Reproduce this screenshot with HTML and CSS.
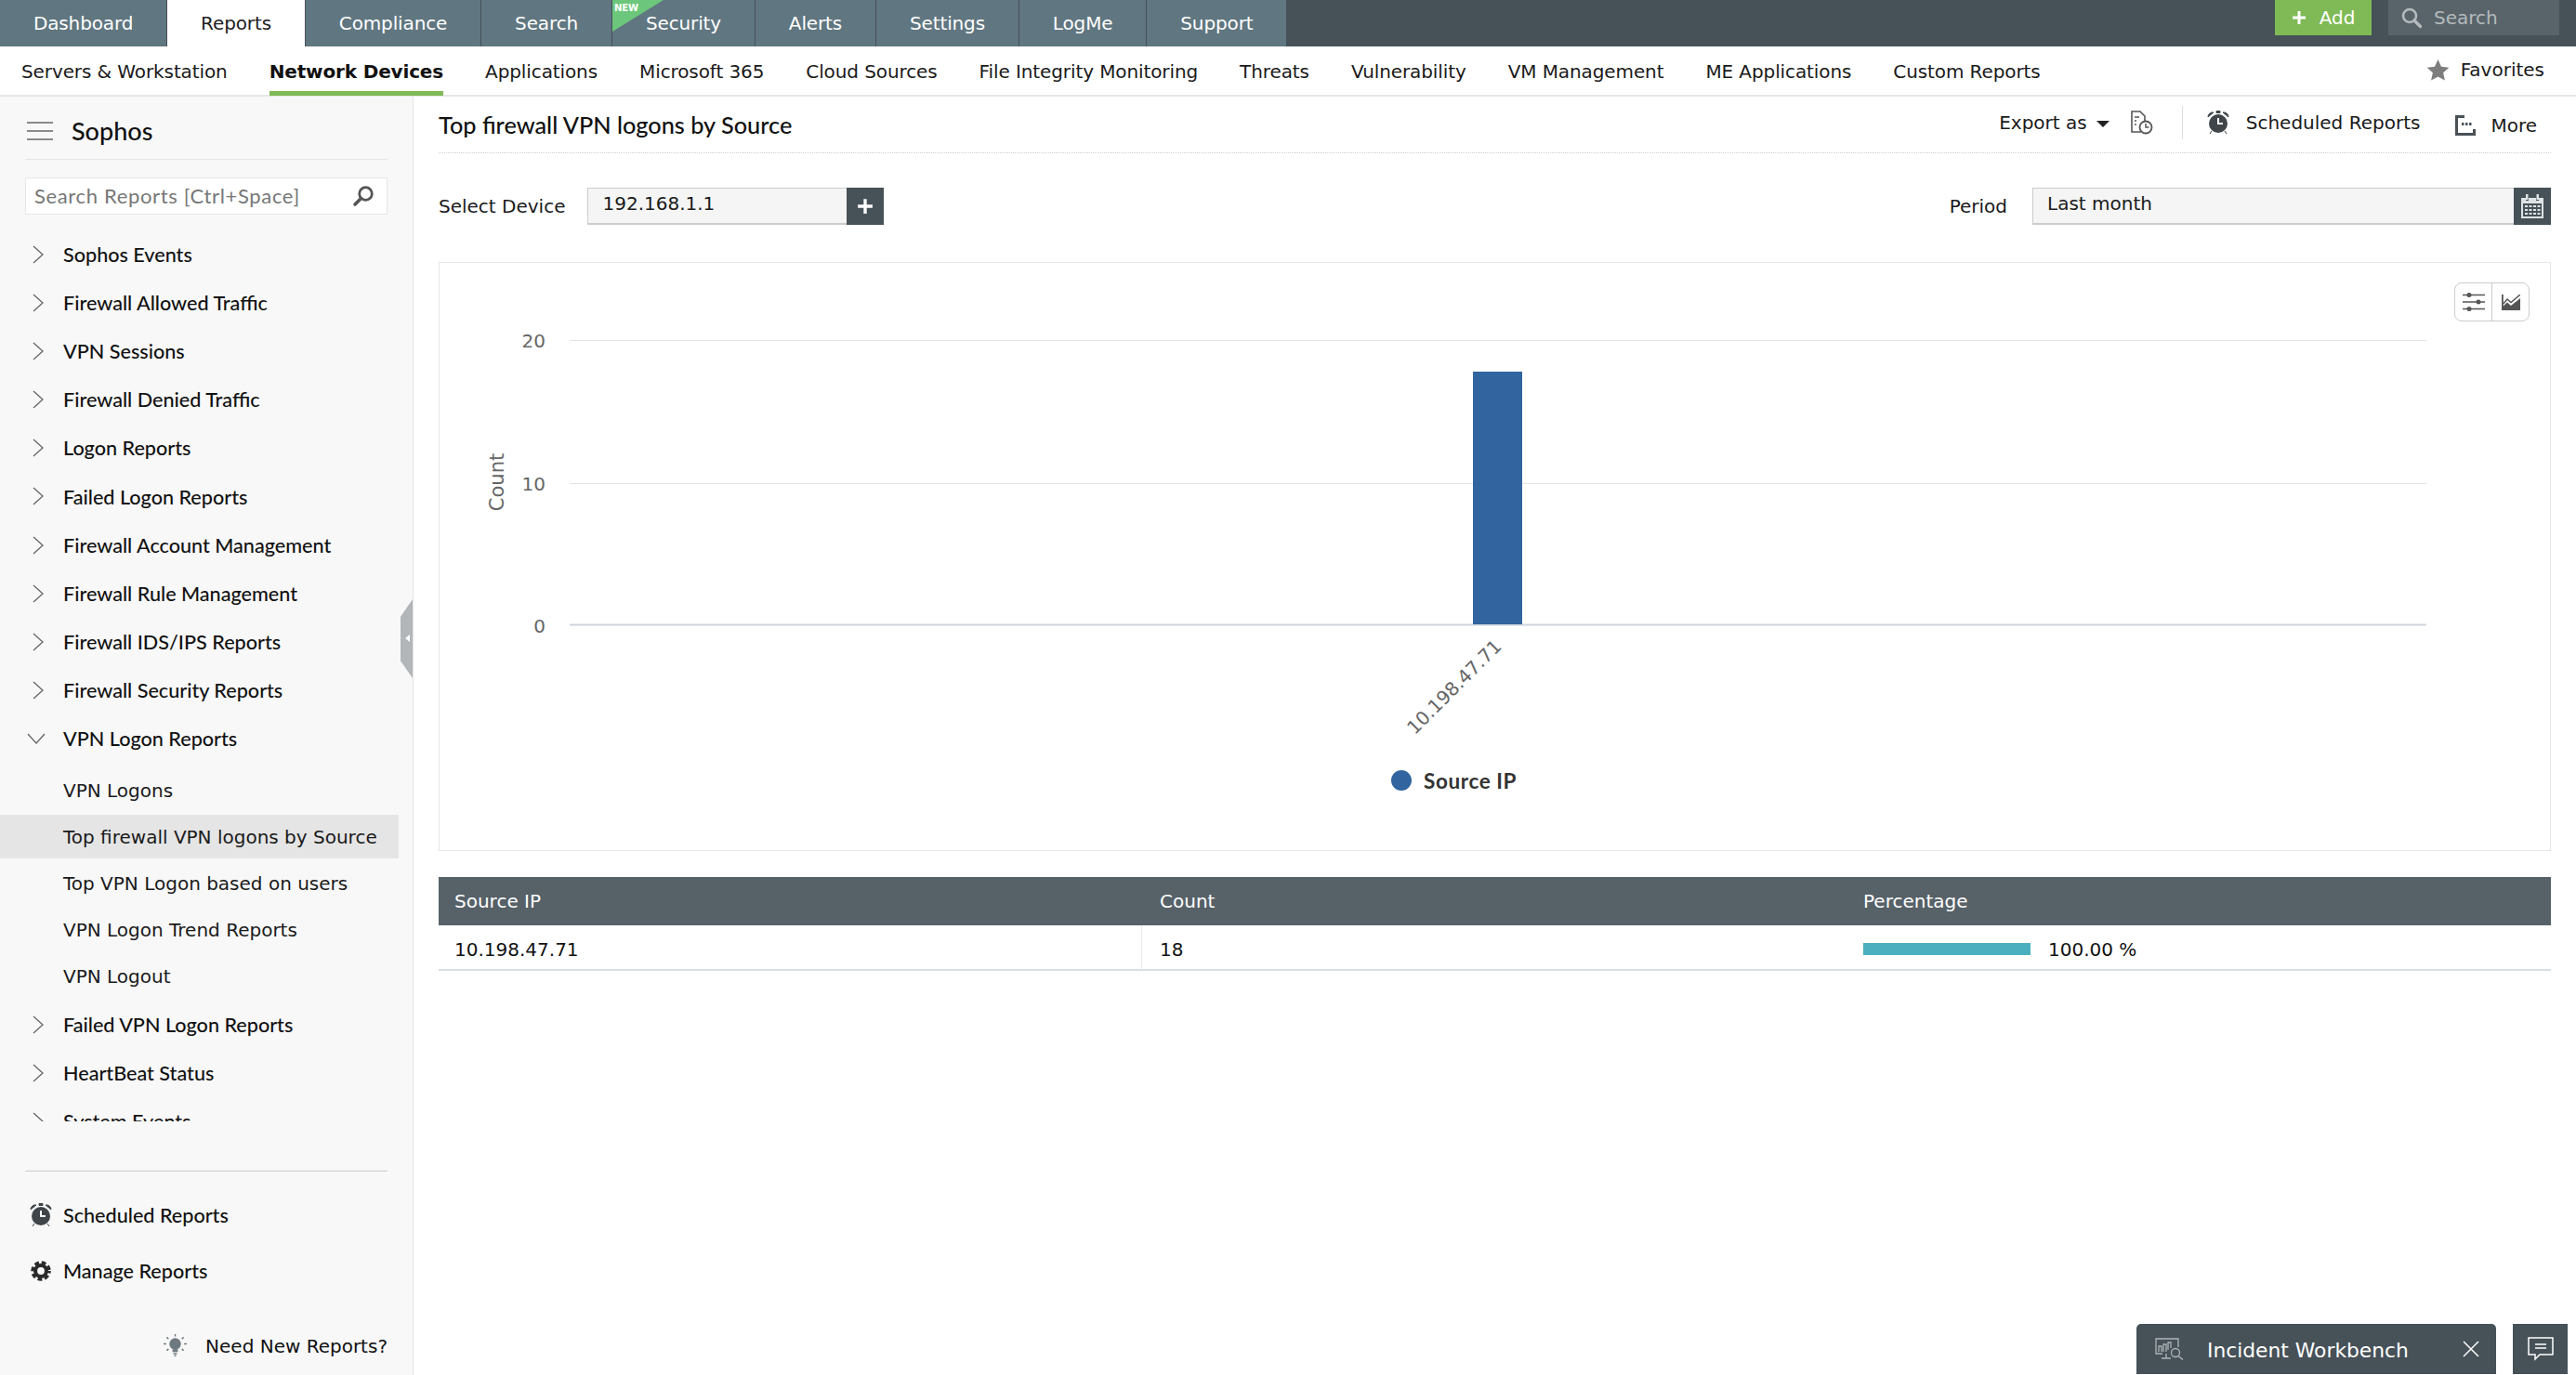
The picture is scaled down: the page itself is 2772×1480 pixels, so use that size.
FILE: index.html
```html
<!DOCTYPE html>
<html lang="en">
<head>
<meta charset="utf-8">
<title>Top firewall VPN logons by Source</title>
<link rel="stylesheet" href="styles.css">
</head>
<body>
<div class="app">
  <header class="topbar">
    <nav class="tabs">
      <a class="tab">Dashboard</a>
      <a class="tab tab-active">Reports</a>
      <a class="tab">Compliance</a>
      <a class="tab">Search</a>
      <a class="tab tab-new"><span class="ribbon"></span><span class="ribbon-text">NEW</span>Security</a>
      <a class="tab">Alerts</a>
      <a class="tab">Settings</a>
      <a class="tab">LogMe</a>
      <a class="tab">Support</a>
    </nav>
    <div class="top-actions">
      <a class="add-btn"><svg class="add-plus" viewBox="0 0 16 16"><path d="M6.5 1h3v5.5H15v3H9.500V15h-3V9.500H1v-3h5.500z" fill="#fff"/></svg>Add</a>
      <div class="top-search"><svg class="top-search-icon" viewBox="0 0 24 24"><circle cx="10" cy="10" r="7" fill="none" stroke="#b4babd" stroke-width="2.600"/><path d="M15 15l6.500 6.500" stroke="#b4babd" stroke-width="3.400" stroke-linecap="round"/></svg>Search</div>
    </div>
  </header>

  <nav class="subnav">
    <a class="subitem">Servers &amp; Workstation</a>
    <a class="subitem subitem-active">Network Devices</a>
    <a class="subitem">Applications</a>
    <a class="subitem">Microsoft 365</a>
    <a class="subitem">Cloud Sources</a>
    <a class="subitem">File Integrity Monitoring</a>
    <a class="subitem">Threats</a>
    <a class="subitem">Vulnerability</a>
    <a class="subitem">VM Management</a>
    <a class="subitem">ME Applications</a>
    <a class="subitem">Custom Reports</a>
    <a class="favorites"><svg class="star" viewBox="0 0 24 24"><path d="M12 1l3.400 7.400 8 .9-6 5.400 1.700 7.900L12 18.600l-7.100 4 1.700-7.900-6-5.400 8-.9z" fill="#7d7d7d"/></svg>Favorites</a>
  </nav>

  <div class="body-row">
    <aside class="sidebar">
      <div class="side-head">
        <svg class="hamburger" viewBox="0 0 28 20"><path d="M0 1h28M0 10h28M0 19h28" stroke="#666" stroke-width="1.500"/></svg>
        <span class="side-title">Sophos</span>
      </div>
      <div class="side-search">
        <span class="side-search-text">Search Reports [Ctrl+Space]</span>
        <svg class="side-search-icon" viewBox="0 0 24 24"><circle cx="14.500" cy="9.500" r="6.800" fill="none" stroke="#555" stroke-width="2.800"/><path d="M9.500 14.500L3 21" stroke="#555" stroke-width="3.600" stroke-linecap="round"/></svg>
      </div>
      <div class="tree">
        <div class="node"><svg class="chev" viewBox="0 0 12 20"><path d="M1 1l10 9-10 9" fill="none" stroke="#666" stroke-width="1.300"/></svg>Sophos Events</div>
        <div class="node"><svg class="chev" viewBox="0 0 12 20"><path d="M1 1l10 9-10 9" fill="none" stroke="#666" stroke-width="1.300"/></svg>Firewall Allowed Traffic</div>
        <div class="node"><svg class="chev" viewBox="0 0 12 20"><path d="M1 1l10 9-10 9" fill="none" stroke="#666" stroke-width="1.300"/></svg>VPN Sessions</div>
        <div class="node"><svg class="chev" viewBox="0 0 12 20"><path d="M1 1l10 9-10 9" fill="none" stroke="#666" stroke-width="1.300"/></svg>Firewall Denied Traffic</div>
        <div class="node"><svg class="chev" viewBox="0 0 12 20"><path d="M1 1l10 9-10 9" fill="none" stroke="#666" stroke-width="1.300"/></svg>Logon Reports</div>
        <div class="node"><svg class="chev" viewBox="0 0 12 20"><path d="M1 1l10 9-10 9" fill="none" stroke="#666" stroke-width="1.300"/></svg>Failed Logon Reports</div>
        <div class="node"><svg class="chev" viewBox="0 0 12 20"><path d="M1 1l10 9-10 9" fill="none" stroke="#666" stroke-width="1.300"/></svg>Firewall Account Management</div>
        <div class="node"><svg class="chev" viewBox="0 0 12 20"><path d="M1 1l10 9-10 9" fill="none" stroke="#666" stroke-width="1.300"/></svg>Firewall Rule Management</div>
        <div class="node"><svg class="chev" viewBox="0 0 12 20"><path d="M1 1l10 9-10 9" fill="none" stroke="#666" stroke-width="1.300"/></svg>Firewall IDS/IPS Reports</div>
        <div class="node"><svg class="chev" viewBox="0 0 12 20"><path d="M1 1l10 9-10 9" fill="none" stroke="#666" stroke-width="1.300"/></svg>Firewall Security Reports</div>
        <div class="node"><svg class="chev chev-open" viewBox="0 0 20 12"><path d="M1 1l9 10 9-10" fill="none" stroke="#666" stroke-width="1.300"/></svg>VPN Logon Reports</div>
        <div class="leaves">
          <div class="leaf">VPN Logons</div>
          <div class="leaf leaf-active">Top firewall VPN logons by Source</div>
          <div class="leaf">Top VPN Logon based on users</div>
          <div class="leaf">VPN Logon Trend Reports</div>
          <div class="leaf">VPN Logout</div>
        </div>
        <div class="node"><svg class="chev" viewBox="0 0 12 20"><path d="M1 1l10 9-10 9" fill="none" stroke="#666" stroke-width="1.300"/></svg>Failed VPN Logon Reports</div>
        <div class="node"><svg class="chev" viewBox="0 0 12 20"><path d="M1 1l10 9-10 9" fill="none" stroke="#666" stroke-width="1.300"/></svg>HeartBeat Status</div>
        <div class="node"><svg class="chev" viewBox="0 0 12 20"><path d="M1 1l10 9-10 9" fill="none" stroke="#666" stroke-width="1.300"/></svg>System Events</div>
      </div>
      <div class="side-foot">
        <div class="foot-link">
          <svg class="foot-icon" viewBox="0 0 24 26"><circle cx="12" cy="14" r="10" fill="#3f4549"/><path d="M1 7a5 5 0 0 1 6-5zM23 7a5 5 0 0 0-6-5zM10 .5h4v2h-4zM5 22l-2 3M19 22l2 3" fill="#3f4549" stroke="#3f4549"/><path d="M12 8v6h5" fill="none" stroke="#fff" stroke-width="2"/></svg>
          Scheduled Reports
        </div>
        <div class="foot-link">
          <svg class="foot-icon gear" viewBox="0 0 24 24"><circle cx="12" cy="12" r="6.500" fill="none" stroke="#2b2b2b" stroke-width="4.500"/><circle cx="12" cy="12" r="9.500" fill="none" stroke="#2b2b2b" stroke-width="4.500" stroke-dasharray="5 2.960" stroke-dashoffset="2.500"/></svg>
          Manage Reports
        </div>
        <div class="need">
          <svg class="bulb" viewBox="0 0 26 26"><circle cx="13" cy="11" r="6.500" fill="#6e7a80"/><path d="M10 17h6v3h-6zM11 21h4v1.500h-4zM12 23.500h2V25h-2z" fill="#6e7a80"/><path d="M13 0v2.500M3.500 3.500l2 2M22.500 3.500l-2 2M0 11h3M23 11h3M3.500 18.500l2-2M22.500 18.500l-2-2" stroke="#6e7a80" stroke-width="1.500"/></svg>
          <span class="need-text">Need New Reports?</span>
        </div>
      </div>
      <div class="collapse"><span class="collapse-arrow"></span></div>
    </aside>

    <main class="main">
      <div class="title-row">
        <h1 class="title">Top firewall VPN logons by Source</h1>
        <div class="toolbar">
          <span class="tool-export">Export as<span class="caret"></span></span>
          <svg class="doc-clock" viewBox="0 0 25 28"><path d="M12 24H2V2h9l5 5v5" fill="none" stroke="#555" stroke-width="1.600"/><path d="M5 8h5M5 12h2M5 16h2" stroke="#555" stroke-width="1.600"/><circle cx="17" cy="19" r="6.500" fill="#fff" stroke="#555" stroke-width="1.800"/><path d="M17 15v4h3.500" fill="none" stroke="#555" stroke-width="1.500"/></svg>
          <span class="tool-sep"></span>
          <svg class="tool-alarm" viewBox="0 0 24 26"><circle cx="12" cy="14" r="10" fill="#3f4549"/><path d="M1 7a5 5 0 0 1 6-5zM23 7a5 5 0 0 0-6-5zM10 .5h4v2h-4zM5 22l-2 3M19 22l2 3" fill="#3f4549" stroke="#3f4549"/><path d="M12 8v6h5" fill="none" stroke="#fff" stroke-width="2"/></svg>
          <span class="tool-sched">Scheduled Reports</span>
          <svg class="tool-more-icon" viewBox="0 0 22 22"><path d="M10 1.500H1.500v19h19V15" fill="none" stroke="#4a5258" stroke-width="3"/><path d="M7 8h2.500v3H7zM11 8h2.500v3H11zM15 8h2.500v3H15z" fill="#4a5258"/></svg>
          <span class="tool-more">More</span>
        </div>
      </div>

      <div class="filters">
        <div class="filter">
          <label class="filter-label">Select Device</label>
          <span class="field field-device">192.168.1.1</span>
          <span class="field-btn"><svg class="plus-icon" viewBox="0 0 16 16"><path d="M6.500 1h3v5.500H15v3H9.500V15h-3V9.500H1v-3h5.500z" fill="#fff"/></svg></span>
        </div>
        <div class="filter">
          <label class="filter-label filter-label-period">Period</label>
          <span class="field field-period">Last month</span>
          <span class="field-btn"><svg class="cal-icon" viewBox="0 0 26 28"><path d="M1 5h5v3h3V5h8v3h3V5h5v22H1z" fill="#dfe3e5"/><path d="M6 1h2.500v6H6zM17.500 1H20v6h-2.500z" fill="#dfe3e5"/><rect x="3" y="11" width="20" height="14" fill="#465158"/><path d="M5 13h3v2H5zM9.500 13h3v2h-3zM14 13h3v2h-3zM18.500 13h3v2h-3zM5 17h3v2H5zM9.500 17h3v2h-3zM14 17h3v2h-3zM18.500 17h3v2h-3zM5 21h3v2H5zM9.500 21h3v2h-3zM14 21h3v2h-3zM18.500 21h3v2h-3z" fill="#dfe3e5"/></svg></span>
        </div>
      </div>

      <section class="chart-card">
        <div class="chart-toggle">
          <span class="toggle-cell"><svg class="sliders-icon" viewBox="0 0 24 20"><path d="M0 2.500h24M0 10h24M0 17.500h24" stroke="#555" stroke-width="1.600"/><circle cx="7" cy="2.500" r="2.500" fill="#555"/><circle cx="17" cy="10" r="2.500" fill="#555"/><circle cx="7" cy="17.500" r="2.500" fill="#555"/></svg></span>
          <span class="toggle-cell toggle-cell-last"><svg class="trend-icon" viewBox="0 0 20 17"><path d="M0 0h1.800v17H0z" fill="#555"/><path d="M0 14l6-5.500 4 3.500 10-8v13H0z" fill="#555"/><path d="M1.800 10L6 5l4 3.500L20 0" fill="none" stroke="#555" stroke-width="1.400"/></svg></span>
        </div>
        <svg class="chart" viewBox="0 0 2271 632" width="2271" height="632">
          <g stroke="#e0e4e6" stroke-width="1">
            <path d="M140 83.500H2138M140 237.500H2138"/>
          </g>
          <path d="M140 389.500H2138" stroke="#cfd6dc" stroke-width="2"/>
          <rect x="1112" y="117" width="53" height="272" fill="#32659f"/>
          <g class="axis-text">
            <text x="114" y="91" text-anchor="end">20</text>
            <text x="114" y="245" text-anchor="end">10</text>
            <text x="114" y="398" text-anchor="end">0</text>
            <text class="axis-title" x="0" y="0" text-anchor="middle" transform="translate(69 236) rotate(-90)">Count</text>
            <text x="0" y="0" text-anchor="end" transform="translate(1144 414) rotate(-45)">10.198.47.71</text>
          </g>
          <circle cx="1035" cy="557" r="11" fill="#32659f"/>
          <text class="legend-text" x="1059" y="566">Source IP</text>
        </svg>
      </section>

      <div class="table">
        <div class="t-row t-head">
          <div class="t-cell t-c1">Source IP</div>
          <div class="t-cell t-c2">Count</div>
          <div class="t-cell t-c3">Percentage</div>
        </div>
        <div class="t-row t-data">
          <div class="t-cell t-c1 t-divided"><span class="t-text">10.198.47.71</span></div>
          <div class="t-cell t-c2"><span class="t-text">18</span></div>
          <div class="t-cell t-c3"><span class="bar"></span><span class="t-text">100.00 %</span></div>
        </div>
      </div>
    </main>
  </div>

  <div class="dock">
    <div class="workbench">
      <svg class="wb-icon" viewBox="0 0 32 24"><path d="M9 17H2V1h24v9" fill="none" stroke="#aeb4b7" stroke-width="1.300"/><path d="M5 15V9h3v6M10 15V7h3v8M15 13V5h3v6" fill="none" stroke="#aeb4b7" stroke-width="1.300"/><path d="M8 22h10M13 17v5" stroke="#aeb4b7" stroke-width="1.300"/><circle cx="23" cy="16" r="4.500" fill="none" stroke="#aeb4b7" stroke-width="1.300"/><path d="M26 19.500l5 4" stroke="#aeb4b7" stroke-width="1.500"/></svg>
      <span class="wb-text">Incident Workbench</span>
      <svg class="wb-close" viewBox="0 0 18 18"><path d="M1 1l16 16M17 1L1 17" stroke="#fff" stroke-width="1.500"/></svg>
    </div>
    <div class="chat"><svg class="chat-icon" viewBox="0 0 28 26"><path d="M1 1h26v18H13l-5 5v-5H1z" fill="none" stroke="#fff" stroke-width="1.500"/><path d="M8 8h12M8 12h12" stroke="#fff" stroke-width="1.500"/></svg></div>
  </div>
</div>
</body>
</html>
```

FILE: styles.css
```css
* { box-sizing: border-box; }
html, body { margin: 0; height: 100%; }
body {
  font-family: "DejaVu Sans", Verdana, sans-serif;
  font-size: 20px;
  color: #111;
  background: #fff;
  overflow: hidden;
}
.app { position: relative; height: 100vh; display: flex; flex-direction: column; }

/* Top bar */
.topbar { height: 50px; flex: none; background: #465158; display: flex; justify-content: space-between; }
.tabs { display: flex; letter-spacing: -.12px; }
.tab {
  position: relative;
  display: flex;
  align-items: center;
  padding: 0 35.9px;
  color: #fff;
  background: #607680;
  border-right: 1px solid #465158;
  font-size: 20px;
  white-space: nowrap;
}
.tab:last-child { border-right: 0; }
.tab-active { background: #fff; color: #222; }
.ribbon {
  position: absolute;
  left: 0;
  top: 0;
  width: 55px;
  height: 34px;
  background: #6cc77c;
  clip-path: polygon(0 0, 100% 0, 0 100%);
}
.ribbon-text {
  position: absolute;
  left: 2px;
  top: 3px;
  font-size: 10px;
  line-height: 11px;
  font-weight: 700;
  color: #fff;
}
.top-actions { display: flex; gap: 18px; padding-right: 18px; align-items: flex-start; }
.add-btn {
  width: 104px;
  height: 38px;
  background: #7fba56;
  color: #fff;
  display: flex;
  align-items: center;
  justify-content: center;
  gap: 14px;
  font-size: 20px;
}
.add-plus { width: 16px; height: 16px; }
.top-search {
  width: 184px;
  height: 38px;
  background: #59646a;
  color: #b4babd;
  display: flex;
  align-items: center;
  gap: 12px;
  padding-left: 13px;
  font-size: 20px;
}
.top-search-icon { width: 24px; height: 24px; }

/* Sub nav */
.subnav {
  height: 54px;
  flex: none;
  display: flex;
  gap: 45px;
  padding-left: 23px;
  padding-right: 34px;
  border-bottom: 2px solid #e6e6e6;
  font-size: 20px;
}
.subitem { display: flex; align-items: center; height: 53px; letter-spacing: -.1px; white-space: nowrap; color: #1a1a1a; }
.subitem-active { font-weight: 700; box-shadow: inset 0 -5px 0 #7fba56; color: #111; letter-spacing: -.15px; }
.favorites { margin-left: auto; display: flex; align-items: center; gap: 12px; height: 50px; white-space: nowrap; color: #1a1a1a; }
.star { width: 25px; height: 25px; }

/* Body */
.body-row { flex: 1; display: flex; min-height: 0; }
.sidebar {
  position: relative;
  width: 445px;
  flex: none;
  background: #f8f8f8;
  border-right: 1px solid #e6e6e6;
  display: flex;
  flex-direction: column;
  font-family: Lato, "Liberation Sans", sans-serif;
}
.side-head {
  margin: 0 27px;
  height: 68px;
  border-bottom: 1px solid #e6e6e6;
  display: flex;
  align-items: center;
  gap: 20px;
  padding: 6px 2px 0;
}
.hamburger { width: 28px; height: 20px; }
.side-title { font-size: 27px; font-weight: 500; color: #111; }
.side-search {
  margin: 19px 27px 17px;
  height: 40px;
  background: #fff;
  border: 1px solid #e6e6e6;
  display: flex;
  align-items: center;
  justify-content: space-between;
  padding: 0 13px 0 9px;
}
.side-search-text { font-size: 22px; letter-spacing: .65px; color: #777; white-space: nowrap; padding-bottom: 2px; }
.side-search-icon { width: 24px; height: 24px; }
.tree { flex: none; overflow: hidden; padding-right: 15px; height: 959px; }
.node {
  height: 52.100px;
  display: flex;
  align-items: center;
  font-size: 21.6px;
  font-weight: 500;
  color: #111;
  white-space: nowrap;
  position: relative;
  padding-left: 68px;
}
.chev { position: absolute; left: 35px; top: 16px; width: 12px; height: 20px; }
.chev-open { left: 29px; top: 20px; width: 20px; height: 12px; }
.leaves { display: flex; flex-direction: column; gap: 3px; padding-top: 6px; padding-bottom: 3px; }
.leaf {
  height: 47px;
  display: flex;
  align-items: center;
  padding-left: 68px;
  font-family: "DejaVu Sans", Verdana, sans-serif;
  font-size: 20px;
  color: #1a1a1a;
  white-space: nowrap;
}
.leaf-active { background: #e5e5e5; }
.side-foot { margin: 53px 27px 0; border-top: 1px solid #ccc; flex: 1; display: flex; flex-direction: column; }
.foot-link {
  display: flex;
  align-items: center;
  height: 60px;
  gap: 12px;
  font-size: 21.6px;
  font-weight: 500;
  color: #111;
  white-space: nowrap;
  padding-left: 5px;
}
.foot-link:first-child { margin-top: 17px; }
.foot-icon { width: 24px; height: 26px; }
.gear { width: 22px; height: 22px; margin-left: 1px; margin-right: 1px; }
.need { display: flex; align-items: center; justify-content: flex-end; gap: 20px; margin-top: 38px; }
.bulb { width: 25px; height: 25px; }
.need-text { font-family: "DejaVu Sans", Verdana, sans-serif; font-size: 20px; color: #111; }
.collapse {
  position: absolute;
  right: 0;
  top: 541px;
  width: 13px;
  height: 85px;
  background: #b2b6b8;
  clip-path: polygon(100% 0, 100% 100%, 0 78%, 0 22%);
}
.collapse-arrow {
  position: absolute;
  left: 5px;
  top: 38px;
  border: 4px solid transparent;
  border-left-width: 0;
  border-right: 5px solid #fff;
}

/* Main */
.main { flex: 1; min-width: 0; padding: 0 27px; display: flex; flex-direction: column; }
.title-row {
  height: 61px;
  flex: none;
  display: flex;
  align-items: center;
  justify-content: space-between;
  border-bottom: 1px dotted #ccc;
}
.title { margin: 0; font-family: Lato, "Liberation Sans", sans-serif; font-size: 25.3px; font-weight: 500; color: #111; }
.toolbar { display: flex; align-items: center; font-size: 20px; color: #1a1a1a; padding-right: 15px; margin-top: -4px; }
.tool-export { display: flex; align-items: center; }
.caret { margin-left: 10px; margin-top: 3px; border: 7px solid transparent; border-top: 7px solid #222; border-bottom: 0; }
.doc-clock { width: 25px; height: 28px; margin-left: 22px; }
.tool-sep { width: 1px; height: 36px; background: #ddd; margin-left: 31px; margin-right: 26px; }
.tool-alarm { width: 24px; height: 26px; }
.tool-sched { margin-left: 18px; }
.tool-more-icon { width: 22px; height: 22px; margin-left: 38px; margin-top: 5px; }
.tool-more { margin-left: 16px; margin-top: 5px; }
.filters { flex: none; height: 117px; display: flex; justify-content: space-between; padding-top: 37px; }
.filter { display: flex; align-items: flex-start; }
.filter-label { line-height: 40px; margin-right: 24px; color: #1a1a1a; }
.filter-label-period { margin-right: 27px; }
.field {
  display: block;
  height: 40px;
  background: #f5f5f5;
  border: 1px solid #ccc;
  border-bottom-width: 2px;
  border-right: 0;
  line-height: 33px;
  padding-left: 15px;
  color: #1a1a1a;
}
.field-device { width: 279px; }
.field-period { width: 518px; }
.field-btn { width: 40px; height: 40px; background: #465158; display: flex; align-items: center; justify-content: center; }
.plus-icon { width: 18px; height: 18px; }
.cal-icon { width: 26px; height: 28px; }
.chart-card { position: relative; flex: none; height: 634px; border: 1px solid #e6e6e6; }
.chart { display: block; }
.chart-toggle {
  position: absolute;
  top: 21px;
  right: 22px;
  display: flex;
  width: 81px;
  height: 42px;
  border: 1px solid #ccc;
  border-radius: 8px;
  background: #fff;
}
.toggle-cell { flex: 1; display: flex; align-items: center; justify-content: center; border-right: 1px solid #ccc; }
.toggle-cell-last { border-right: 0; }
.sliders-icon { width: 24px; height: 20px; }
.trend-icon { width: 20px; height: 17px; }
.axis-text text { font-family: "DejaVu Sans", Verdana, sans-serif; font-size: 20px; fill: #666; }
.axis-text .axis-title { font-size: 21px; }
.legend-text { font-family: Lato, "Liberation Sans", sans-serif; font-size: 22.5px; font-weight: 700; letter-spacing: .6px; fill: #333; }
.table { margin-top: 28px; flex: none; }
.t-row { display: flex; }
.t-head { height: 52px; background: #566168; color: #fff; align-items: center; }
.t-data { height: 49px; border-bottom: 2px solid #d8dfe5; align-items: stretch; }
.t-cell { padding-left: 17px; display: flex; align-items: center; color: inherit; }
.t-c1 { width: 757px; }
.t-c2 { width: 757px; padding-left: 19px; }
.t-c3 { flex: 1; padding-left: 19px; }
.t-divided { border-right: 1px solid #e6ebef; }
.t-text { padding-top: 4px; }
.bar { display: inline-block; width: 180px; height: 13px; background: #4cafc0; margin-top: 4px; margin-right: 19px; }

/* Bottom dock */
.dock { position: absolute; right: 9px; bottom: 1px; display: flex; gap: 18px; }
.workbench {
  width: 387px;
  height: 54px;
  background: #465158;
  border-radius: 5px 5px 0 0;
  display: flex;
  align-items: center;
  padding: 0 18px 0 19px;
  color: #fff;
}
.wb-icon { width: 32px; height: 24px; }
.wb-text { margin-left: 25px; font-size: 21.8px; flex: 1; white-space: nowrap; padding-top: 2px; }
.wb-close { width: 18px; height: 18px; }
.chat { width: 59px; height: 54px; background: #465158; display: flex; align-items: center; justify-content: center; }
.chat-icon { width: 28px; height: 26px; }
```
